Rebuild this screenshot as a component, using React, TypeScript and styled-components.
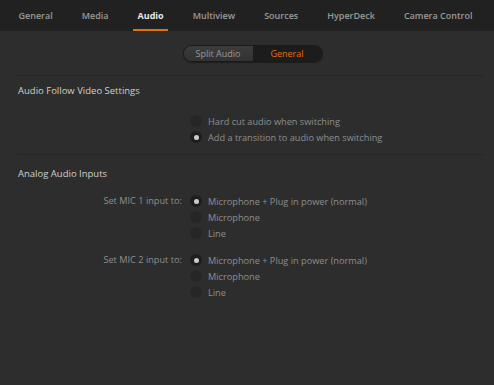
import React from "react";
import styled, { createGlobalStyle } from "styled-components";

const GlobalStyle = createGlobalStyle`
    html, body {
        margin: 0;
        padding: 0;
        background: #2d2d2d;
    }
    body {
        font-family: "Open Sans", "Liberation Sans", sans-serif;
        -webkit-font-smoothing: antialiased;
    }
`;

const Page = styled.div`
    width: 494px;
    height: 385px;
    background: #2d2d2d;
    display: flex;
    flex-direction: column;
    overflow: hidden;
`;

const TabBar = styled.div`
    height: 31px;
    flex-shrink: 0;
    background: #212121;
    display: flex;
    align-items: stretch;
    padding-left: 4px;
`;

const Tab = styled.div<{ $active?: boolean }>`
    position: relative;
    display: flex;
    align-items: center;
    padding: 0 14.5px;
    font-size: 9px;
    font-weight: ${p => (p.$active ? 700 : 600)};
    color: ${p => (p.$active ? "#e8e8e8" : "#9a9a9a")};
    white-space: nowrap;
    &::after {
        content: "";
        display: ${p => (p.$active ? "block" : "none")};
        position: absolute;
        left: 10px;
        right: 10px;
        bottom: 0;
        height: 2px;
        background: #e2700f;
    }
`;

const SegRow = styled.div`
    display: flex;
    justify-content: center;
    padding: 14px 0 13px 11px;
`;

const Segmented = styled.div`
    display: flex;
    height: 17px;
    border-radius: 9px;
    border: 1px solid #1a1a1a;
    box-sizing: border-box;
    overflow: hidden;
    box-shadow: 0 1px 1px rgba(0, 0, 0, 0.35);
`;

const Segment = styled.div<{ $active?: boolean }>`
    width: 69px;
    display: flex;
    align-items: center;
    justify-content: center;
    font-size: 9px;
    color: ${p => (p.$active ? "#e2700f" : "#9a9a9a")};
    background: ${p => (p.$active ? "#1c1c1c" : "linear-gradient(#3c3c3c, #323232)")};
`;

const Divider = styled.div`
    height: 1px;
    flex-shrink: 0;
    margin: 0 10px 0 18px;
    background: #262626;
`;

const Section = styled.div<{ $top: number; $bottom: number }>`
    padding: ${p => p.$top}px 0 ${p => p.$bottom}px 18px;
    display: flex;
    flex-direction: column;
`;

const SectionTitle = styled.div`
    height: 16px;
    line-height: 16px;
    font-size: 9.5px;
    color: #cfcfcf;
`;

const Group = styled.div<{ $gap: number }>`
    display: grid;
    grid-template-columns: 164px 1fr;
    column-gap: 8px;
    margin-top: ${p => p.$gap}px;
`;

const GroupLabel = styled.div`
    height: 16px;
    line-height: 16px;
    text-align: right;
    font-size: 9.2px;
    color: #8e8e8e;
    white-space: nowrap;
`;

const Options = styled.div`
    display: flex;
    flex-direction: column;
`;

const Option = styled.div`
    height: 16px;
    display: flex;
    align-items: center;
    gap: 6px;
    font-size: 9.2px;
    color: #8e8e8e;
    white-space: nowrap;
`;

const Radio = styled.span<{ $checked?: boolean }>`
    width: 12px;
    height: 12px;
    border-radius: 50%;
    flex-shrink: 0;
    box-sizing: border-box;
    background: ${p => (p.$checked ? "#1e1e1e" : "#262626")};
    display: flex;
    align-items: center;
    justify-content: center;
    &::after {
        content: "";
        display: ${p => (p.$checked ? "block" : "none")};
        width: 5px;
        height: 5px;
        border-radius: 50%;
        background: #cacaca;
    }
`;

const tabs = ["General", "Media", "Audio", "Multiview", "Sources", "HyperDeck", "Camera Control"];

const micOptions = ["Microphone + Plug in power (normal)", "Microphone", "Line"];

function RadioList({ items, selected }: { items: string[]; selected: number }) {
    return (
        <Options>
            {items.map((item, i) => (
                <Option key={item}>
                    <Radio $checked={i === selected} />
                    {item}
                </Option>
            ))}
        </Options>
    );
}

export default function App() {
    return (
        <>
            <GlobalStyle />
            <Page>
                <TabBar>
                    {tabs.map(t => (
                        <Tab key={t} $active={t === "Audio"}>{t}</Tab>
                    ))}
                </TabBar>
                <SegRow>
                    <Segmented>
                        <Segment>Split Audio</Segment>
                        <Segment $active>General</Segment>
                    </Segmented>
                </SegRow>
                <Divider />
                <Section $top={7} $bottom={9}>
                    <SectionTitle>Audio Follow Video Settings</SectionTitle>
                    <Group $gap={14}>
                        <span />
                        <RadioList
                            items={["Hard cut audio when switching", "Add a transition to audio when switching"]}
                            selected={1}
                        />
                    </Group>
                </Section>
                <Divider />
                <Section $top={11} $bottom={0}>
                    <SectionTitle>Analog Audio Inputs</SectionTitle>
                    <Group $gap={11}>
                        <GroupLabel>Set MIC 1 input to:</GroupLabel>
                        <RadioList items={micOptions} selected={0} />
                    </Group>
                    <Group $gap={11}>
                        <GroupLabel>Set MIC 2 input to:</GroupLabel>
                        <RadioList items={micOptions} selected={0} />
                    </Group>
                </Section>
            </Page>
        </>
    );
}
